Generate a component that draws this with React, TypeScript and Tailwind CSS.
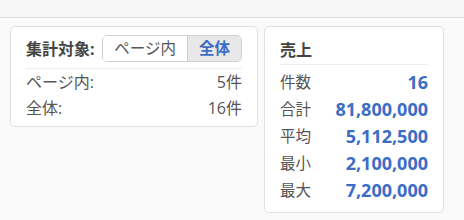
import React from 'react';

const font = { fontFamily: '"Open Sans", "Noto Sans CJK JP", sans-serif' };

const stats = [
    { label: '件数', value: '16' },
    { label: '合計', value: '81,800,000' },
    { label: '平均', value: '5,112,500' },
    { label: '最小', value: '2,100,000' },
    { label: '最大', value: '7,200,000' },
];

export default function App() {
    return (
        <div style={font} className="w-full h-[220px] bg-[#fafafa] text-[#555]">
            <div className="h-[18px] bg-[#f7f7f7] border-b border-[#e2e2e2]" />
            <div className="flex items-start gap-[6px] pl-[10px] pt-[8px]">
                {/* scope card */}
                <div className="w-[248px] bg-white border border-[#e0e0e0] rounded-[5px] px-[15px] pt-[8px] pb-[5px]">
                    <div className="flex items-center justify-between h-[27px]">
                        <span className="text-[16px] font-bold text-[#444]">集計対象:</span>
                        <div className="flex h-[27px] border border-[#cfcfcf] rounded-[5px] overflow-hidden text-[15.5px]">
                            <button className="px-[11px] bg-white text-[#555]">ページ内</button>
                            <button className="px-[11px] bg-[#e8e8e8] border-l border-[#cfcfcf] text-[#3c6dc5] font-bold">全体</button>
                        </div>
                    </div>
                    <div className="mt-[6px] border-t border-[#ececec]">
                        <div className="flex justify-between items-center h-[26px] text-[16px]">
                            <span>ページ内:</span>
                            <span>5件</span>
                        </div>
                        <div className="flex justify-between items-center h-[26px] text-[16px]">
                            <span>全体:</span>
                            <span>16件</span>
                        </div>
                    </div>
                </div>

                {/* sales card */}
                <div className="w-[180px] bg-white border border-[#e0e0e0] rounded-[5px] px-[15px] pt-[11px] pb-[8px]">
                    <div className="h-[24px] flex items-center text-[16px] font-bold text-[#444]">売上</div>
                    <div className="mt-[2px] border-t border-[#ececec] pt-[4px]">
                        {stats.map(s => (
                            <div key={s.label} className="flex justify-between items-center h-[27px]">
                                <span className="text-[15.5px]">{s.label}</span>
                                <span className="text-[18px] font-bold text-[#3c6dc5]">{s.value}</span>
                            </div>
                        ))}
                    </div>
                </div>
            </div>
        </div>
    );
}
